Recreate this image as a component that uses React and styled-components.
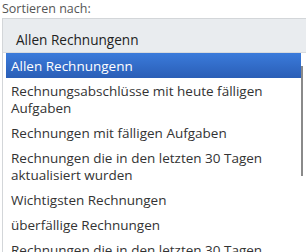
import React from 'react';
import styled, { createGlobalStyle } from 'styled-components';

const GlobalStyle = createGlobalStyle`
  html, body {
    margin: 0;
    padding: 0;
    background: #fff;
    font-family: "Open Sans", "Noto Sans", "Liberation Sans", sans-serif;
  }
`;

const options = [
  'Allen Rechnungenn',
  'Rechnungsabschlüsse mit heute fälligen Aufgaben',
  'Rechnungen mit fälligen Aufgaben',
  'Rechnungen die in den letzten 30 Tagen aktualisiert wurden',
  'Wichtigsten Rechnungen',
  'überfällige Rechnungen',
  'Rechnungen die in den letzten 30 Tagen nicht aktualisiert wurden',
];

export default function App() {
  return (
    <Wrapper>
      <GlobalStyle />
      <Label>Sortieren nach:</Label>
      <Select>
        <Current>Allen Rechnungenn</Current>
        <List>
          {options.map((o, i) => (
            <Option key={i} selected={i === 0}>{o}</Option>
          ))}
          <Thumb />
        </List>
      </Select>
    </Wrapper>
  );
}

const Wrapper = styled.div`
  width: 308px;
  height: 252px;
  overflow: hidden;
  padding-left: 2px;
  box-sizing: border-box;
`;

const Label = styled.div`
  height: 18px;
  font-size: 12.5px;
  line-height: 17px;
  color: #555;
`;

const Select = styled.div`
  width: 304px;
  border: 1px solid #d3d6d9;
  border-right: none;
  box-sizing: border-box;
`;

const Current = styled.div`
  height: 34px;
  padding-left: 13px;
  display: flex;
  align-items: center;
  padding-top: 7px;
  box-sizing: border-box;
  font-size: 13.6px;
  color: #222;
  background: #e9ecef;
  border-bottom: 1px solid #d8dbde;
`;

const List = styled.div`
  position: relative;
  padding-left: 3px;
  padding-right: 5px;
`;

const Option = styled.div`
  padding: 5px 5px 3px;
  font-size: 13.5px;
  line-height: 17px;
  color: ${p => (p.selected ? '#fff' : '#333')};
  background: ${p => (p.selected ? 'linear-gradient(#3b7bdb, #2a5eb6)' : 'transparent')};
`;

const Thumb = styled.div`
  position: absolute;
  top: 13px;
  right: 3px;
  width: 2px;
  height: 110px;
  background: #8a8a8a;
`;
